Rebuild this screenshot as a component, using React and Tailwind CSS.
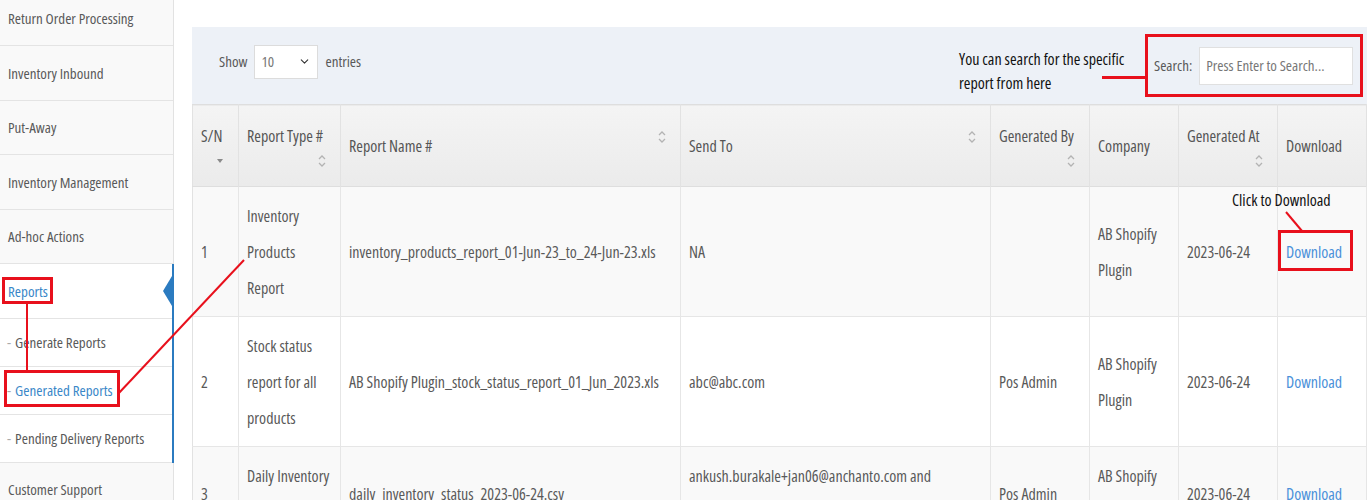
import React from 'react';
import { ChevronDown } from 'lucide-react';

const mainItems = ['Return Order Processing', 'Inventory Inbound', 'Put-Away', 'Inventory Management', 'Ad-hoc Actions'];
const subItems = [
    { label: 'Generate Reports', active: false },
    { label: 'Generated Reports', active: true },
    { label: 'Pending Delivery Reports', active: false },
];

const rows = [
    {
        sn: 1,
        type: ['Inventory', 'Products', 'Report'],
        name: ['inventory_products_report_01-Jun-23_to_24-Jun-23.xls'],
        sendTo: ['NA'],
        by: [],
        company: ['AB Shopify', 'Plugin'],
        at: '2023-06-24',
        bg: 'bg-[#f9f9f9]',
    },
    {
        sn: 2,
        type: ['Stock status', 'report for all', 'products'],
        name: ['AB Shopify Plugin_stock_status_report_01_Jun_2023.xls'],
        sendTo: ['abc@abc.com'],
        by: ['Pos Admin'],
        company: ['AB Shopify', 'Plugin'],
        at: '2023-06-24',
        bg: 'bg-white',
    },
    {
        sn: 3,
        type: ['Daily Inventory', 'Status'],
        name: ['daily_inventory_status_2023-06-24.csv'],
        sendTo: ['ankush.burakale+jan06@anchanto.com and', '1 more'],
        by: ['Pos Admin'],
        company: ['AB Shopify', 'Plugin'],
        at: '2023-06-24',
        bg: 'bg-[#f9f9f9]',
    },
];

// little up/down chevrons used by the sortable columns
function SortIcon() {
    return (
        <svg width="8" height="14" viewBox="0 0 8 14" fill="none">
            <path d="M1 5 L4 2 L7 5 M1 9 L4 12 L7 9" stroke="#b3b3b3" strokeWidth="1.3" />
        </svg>
    );
}

function SortDesc() {
    return (
        <svg width="8" height="14" viewBox="0 0 8 14">
            <path d="M1 5 L7 5 L4 9 Z" fill="#8a8a8a" />
        </svg>
    );
}

function Th({ children, stacked, icon }) {
    return (
        <th
            className={`relative whitespace-nowrap border-r border-[#e2e2e2] px-2 text-left font-normal text-[#555] leading-[28px] ${
                stacked ? 'align-top pt-[17px]' : 'align-middle'
            }`}
        >
            {children}
            {icon && (
                <span className={`absolute right-[14px] flex ${stacked ? 'top-[49px]' : 'top-[25px]'}`}>
                    {icon === 'desc' ? <SortDesc /> : <SortIcon />}
                </span>
            )}
        </th>
    );
}

function Cell({ lines, link }) {
    return (
        <td className="border-r border-[#e6e6e6] px-2 py-[10.5px] align-middle">
            {lines.map((l) => (
                <div key={l} className={`whitespace-nowrap ${link ? 'text-[#4a90d9]' : ''}`}>
                    {l}
                </div>
            ))}
        </td>
    );
}

export default function App() {
    return (
        <div className="relative flex h-[500px] w-[1367px] overflow-hidden bg-white font-['Open_Sans',sans-serif] font-stretch-condensed text-[#595959]">
            {/* Sidebar */}
            <aside className="w-[174px] shrink-0 border-r border-[#e2e2e2] bg-[#f9f9f9] text-[15px]">
                <div className="-mt-[8.5px]">
                    {mainItems.map((item) => (
                        <div key={item} className="flex h-[54.5px] items-center border-b border-[#e4e4e4] pl-2">
                            {item}
                        </div>
                    ))}

                    {/* Reports group (open) */}
                    <div className="-mr-px border-r-2 border-[#2b7bc0] bg-white">
                        <div className="relative flex h-[54.5px] items-center border-b border-[#e4e4e4] pl-2 text-[#3a87c8]">
                            Reports
                            <span className="absolute right-0 top-[12px] h-0 w-0 border-y-[15px] border-r-[9px] border-y-transparent border-r-[#2b7bc0]" />
                        </div>
                        {subItems.map((s) => (
                            <div key={s.label} className="flex h-[48px] items-center border-b border-[#e4e4e4] pl-[7px]">
                                <span className="mr-[4px] text-[#aaa]">-</span>
                                <span className={s.active ? 'text-[#3a87c8]' : ''}>{s.label}</span>
                            </div>
                        ))}
                    </div>

                    <div className="flex h-[54.5px] items-center border-b border-[#e4e4e4] pl-2">Customer Support</div>
                </div>
            </aside>

            {/* Main */}
            <main className="min-w-0 flex-1 pl-[18px] pt-[27px]">
                <div className="flex h-[77px] items-center justify-between bg-[#edf1f7] pl-[27px] pr-1 text-[15px]">
                    <div className="-mt-2 flex items-center">
                        <span>Show</span>
                        <div className="mx-[7px] flex h-[34px] w-[64px] items-center justify-between border border-[#dcdcdc] bg-white pl-[6px] pr-[6px] text-[#777]">
                            <span>10</span>
                            <ChevronDown size={13} strokeWidth={2} color="#333" />
                        </div>
                        <span>entries</span>
                    </div>
                    <div className="flex items-center">
                        <div className="mt-[10px] w-[186px] text-[16px] leading-[24px] text-[#111]">
                            <div>You can search for the specific</div>
                            <div>report from here</div>
                        </div>
                        <div className="flex h-[63px] w-[218px] items-center border-[3px] border-[#e8101c] pl-[6px]">
                            <span className="mr-[7px]">Search:</span>
                            <div className="flex h-[38px] w-[154px] items-center border border-[#e0e0e0] bg-white pl-[6px] text-[#777]">
                                Press Enter to Search...
                            </div>
                        </div>
                    </div>
                </div>

                <table className="w-full table-fixed border-collapse border-l border-[#e2e2e2] text-[16px] leading-[36px]">
                    <colgroup>
                        <col className="w-[46px]" />
                        <col className="w-[102px]" />
                        <col className="w-[340px]" />
                        <col className="w-[310px]" />
                        <col className="w-[99px]" />
                        <col className="w-[89px]" />
                        <col className="w-[99px]" />
                        <col />
                    </colgroup>
                    <thead>
                        <tr className="h-[82px] border-y border-[#dedede] bg-linear-to-b from-[#f4f4f4] to-[#ebebeb]">
                            <Th stacked icon="desc">S/N</Th>
                            <Th stacked icon="sort">Report Type #</Th>
                            <Th icon="sort">Report Name #</Th>
                            <Th icon="sort">Send To</Th>
                            <Th stacked icon="sort">Generated By</Th>
                            <Th>Company</Th>
                            <Th stacked icon="sort">Generated At</Th>
                            <Th>Download</Th>
                        </tr>
                    </thead>
                    <tbody>
                        {rows.map((r) => (
                            <tr key={r.sn} className={`border-b border-[#e6e6e6] ${r.bg}`}>
                                <Cell lines={[String(r.sn)]} />
                                <Cell lines={r.type} />
                                <Cell lines={r.name} />
                                <Cell lines={r.sendTo} />
                                <Cell lines={r.by} />
                                <Cell lines={r.company} />
                                <Cell lines={[r.at]} />
                                <Cell lines={['Download']} link />
                            </tr>
                        ))}
                    </tbody>
                </table>
            </main>

            {/* Annotation layer */}
            <div className="pointer-events-none absolute left-[1232px] top-[188px] text-[16px] leading-[24px] text-[#111]">
                Click to Download
            </div>
            <svg className="pointer-events-none absolute left-0 top-0" width="1367" height="500">
                <g stroke="#e8101c" strokeWidth="3" fill="none">
                    <rect x="3.5" y="278.5" width="48" height="24" />
                    <line x1="27" y1="303" x2="27" y2="370" strokeWidth="2" />
                    <rect x="5.5" y="371.5" width="113" height="34" />
                    <line x1="118" y1="394" x2="244" y2="260" strokeWidth="2" />
                    <rect x="1279.5" y="231.5" width="72" height="38" />
                    <line x1="1286" y1="212" x2="1302" y2="231" strokeWidth="2" />
                    <line x1="1102" y1="77.5" x2="1146" y2="77.5" />
                </g>
            </svg>
        </div>
    );
}
